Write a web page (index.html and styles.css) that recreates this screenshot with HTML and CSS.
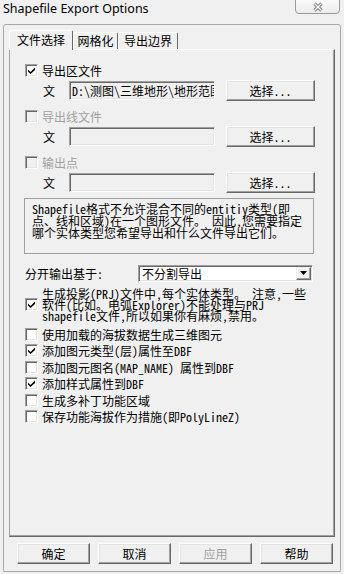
FILE: index.html
```html
<!DOCTYPE html>
<html lang="zh">
<head>
<meta charset="utf-8">
<title>Shapefile Export Options</title>
<link rel="stylesheet" href="styles.css">
</head>
<body>
<div class="window">
  <div class="titlebar">
    <span class="title">Shapefile Export Options</span>
    <div class="close">
      <svg width="12" height="10" viewBox="0 0 12 10"><path d="M2.5 1.5 L9.5 8.5 M9.5 1.5 L2.5 8.5" stroke="#808080" stroke-width="3.2"/><path d="M2.5 1.5 L9.5 8.5 M9.5 1.5 L2.5 8.5" stroke="#fdfdfd" stroke-width="1.3"/></svg>
    </div>
  </div>
  <div class="frame">
    <div class="tabs">
      <div class="tab active t1">文件选择</div>
      <div class="tab t2">网格化</div>
      <div class="tab t3">导出边界</div>
    </div>
    <div class="page">
      <div class="group">
        <div class="cb-row">
          <span class="cb"><svg width="7" height="7" viewBox="0 0 7 7"><path d="M0 2.5 L2.5 5 L7 0.5 V3 L2.5 7 L0 4.5 Z" fill="#000"/></svg></span>
          <span>导出区文件</span>
        </div>
        <div class="file-row">
          <span class="wen">文</span>
          <div class="field">D:\测图\三维地形\地形范围.shp</div>
          <button class="btn sel">选择...</button>
        </div>
      </div>
      <div class="group">
        <div class="cb-row">
          <span class="cb disabled"></span>
          <span class="dis">导出线文件</span>
        </div>
        <div class="file-row">
          <span class="wen">文</span>
          <div class="field"></div>
          <button class="btn sel">选择...</button>
        </div>
      </div>
      <div class="group">
        <div class="cb-row">
          <span class="cb disabled"></span>
          <span class="dis">输出点</span>
        </div>
        <div class="file-row">
          <span class="wen">文</span>
          <div class="field"></div>
          <button class="btn sel">选择...</button>
        </div>
      </div>
      <div class="desc">Shapefile格式不允许混合不同的entitiy类型(即<br>点、线和区域)在一个图形文件。 因此,您需要指定<br>哪个实体类型您希望导出和什么文件导出它们。</div>
      <div class="split-row">
        <span class="split-label">分开输出基于:</span>
        <div class="combo">
          <span class="combo-text">不分割导出</span>
          <span class="combo-btn"><svg width="7" height="4" viewBox="0 0 7 4"><path d="M0 0 H7 L3.5 4 Z" fill="#000"/></svg></span>
        </div>
      </div>
      <div class="multi">
        <span class="cb"><svg width="7" height="7" viewBox="0 0 7 7"><path d="M0 2.5 L2.5 5 L7 0.5 V3 L2.5 7 L0 4.5 Z" fill="#000"/></svg></span>
        <span class="multi-text">生成投影(PRJ)文件中,每个实体类型。 注意,一些<br>软件(比如。电弧Explorer)不能处理与PRJ<br>shapefile文件,所以如果你有麻烦,禁用。</span>
      </div>
      <div class="list">
        <div class="row"><span class="cb"></span><span>使用加载的海拔数据生成三维图元</span></div>
        <div class="row"><span class="cb"><svg width="7" height="7" viewBox="0 0 7 7"><path d="M0 2.5 L2.5 5 L7 0.5 V3 L2.5 7 L0 4.5 Z" fill="#000"/></svg></span><span>添加图元类型(层)属性至DBF</span></div>
        <div class="row"><span class="cb"></span><span>添加图元图名(MAP_NAME) 属性到DBF</span></div>
        <div class="row"><span class="cb"><svg width="7" height="7" viewBox="0 0 7 7"><path d="M0 2.5 L2.5 5 L7 0.5 V3 L2.5 7 L0 4.5 Z" fill="#000"/></svg></span><span>添加样式属性到DBF</span></div>
        <div class="row"><span class="cb"></span><span>生成多补丁功能区域</span></div>
        <div class="row"><span class="cb"></span><span>保存功能海拔作为措施(即PolyLineZ)</span></div>
      </div>
    </div>
    <div class="buttons">
      <button class="btn bottom">确定</button>
      <button class="btn bottom">取消</button>
      <button class="btn bottom dis">应用</button>
      <button class="btn bottom">帮助</button>
    </div>
  </div>
</div>
</body>
</html>
```
FILE: styles.css
```css
html, body {
  margin: 0;
  padding: 0;
  background: #f0f0f0;
}
body {
  font-family: "Noto Sans Mono CJK SC", "Noto Sans CJK SC", sans-serif;
  font-size: 12px;
  color: #000;
}
.window {
  width: 344px;
  height: 574px;
  overflow: hidden;
}
.titlebar {
  height: 24px;
  display: flex;
  justify-content: space-between;
  align-items: flex-start;
}
.title {
  font-family: "Noto Sans", sans-serif;
  font-size: 12.5px;
  line-height: 18px;
  margin-left: 3px;
  color: #000;
}
.close {
  width: 45px;
  height: 16px;
  margin-top: -2px;
  margin-right: 4px;
  box-sizing: border-box;
  border: 1px solid #9a9a9a;
  border-radius: 0 0 4px 4px;
  background: linear-gradient(#fbfbfb, #ececec);
  display: flex;
  align-items: center;
  justify-content: center;
  padding-top: 1px;
}
.frame {
  margin-left: 3px;
  width: 338px;
  height: 548px;
  box-sizing: border-box;
  border: 1px solid #a8a8a8;
  border-radius: 3px 3px 0 0;
  padding: 5px 5px 0;
}
.tabs {
  display: flex;
  align-items: flex-end;
  height: 20px;
  margin-bottom: -1px;
  position: relative;
  z-index: 1;
}
.tab {
  box-sizing: border-box;
  height: 17px;
  margin-bottom: 1px;
  border-top: 1px solid #fff;
  border-left: 1px solid #fff;
  border-right: 1px solid #696969;
  border-radius: 2px 2px 0 0;
  background: #f0f0f0;
  display: flex;
  align-items: center;
  justify-content: center;
  line-height: 12px;
}
.tab.active {
  height: 20px;
  margin-bottom: 0;
  padding-bottom: 1px;
}
.t1 { width: 64px; }
.t2 { width: 45px; }
.t3 { width: 60px; }
.page {
  height: 488px;
  box-sizing: border-box;
  border: 1px solid;
  border-color: #fff #696969 #696969 #a0a0a0;
  box-shadow: inset -1px -1px 0 #a0a0a0;
  padding: 10px 0 0 15px;
}
.group {
  margin-bottom: 5px;
}
.cb-row {
  display: flex;
  align-items: center;
  gap: 4px;
  height: 20px;
}
.cb {
  flex: none;
  width: 13px;
  height: 13px;
  box-sizing: border-box;
  border: 1px solid;
  border-color: #a0a0a0 #fff #fff #a0a0a0;
  box-shadow: inset 1px 1px 0 #696969, inset -1px -1px 0 #e3e3e3;
  background: #fff;
  display: flex;
  align-items: center;
  justify-content: center;
}
.cb svg {
  display: block;
}
.cb.disabled {
  background: #f0f0f0;
}
.dis {
  color: #a0a0a0;
}
.file-row {
  display: flex;
  align-items: center;
  height: 21px;
}
.wen {
  margin-left: 18px;
  width: 12px;
}
.field {
  margin-left: 14px;
  width: 146px;
  height: 19px;
  box-sizing: border-box;
  border: 1px solid;
  border-color: #a0a0a0 #fff #fff #a0a0a0;
  box-shadow: inset 1px 1px 0 #696969, inset -1px -1px 0 #e3e3e3;
  background: #f0f0f0;
  padding: 0 2px;
  line-height: 17px;
  white-space: nowrap;
  overflow: hidden;
}
.btn {
  font: inherit;
  color: #000;
  padding: 0;
  margin: 0;
  box-sizing: border-box;
  border: 1px solid;
  border-color: #fff #696969 #696969 #fff;
  box-shadow: inset -1px -1px 0 #a0a0a0, inset 1px 1px 0 #e3e3e3;
  background: #f0f0f0;
  border-radius: 0;
  line-height: 12px;
  white-space: nowrap;
}
.btn.dis {
  color: #a0a0a0;
}
.sel {
  margin-left: 11px;
  width: 89px;
  height: 21px;
}
.desc {
  margin: 4px 0 0 -1px;
  width: 290px;
  height: 56px;
  box-sizing: border-box;
  border: 1px solid #a0a0a0;
  padding: 4px 7px;
  line-height: 12px;
  white-space: nowrap;
}
.split-row {
  margin-top: 9px;
  height: 20px;
  display: flex;
  align-items: center;
}
.split-label {
  width: 113px;
}
.combo {
  width: 175px;
  height: 17px;
  box-sizing: border-box;
  border: 1px solid;
  border-color: #a0a0a0 #fff #fff #a0a0a0;
  box-shadow: inset 1px 1px 0 #696969, inset -1px -1px 0 #e3e3e3;
  background: #fff;
  display: flex;
  align-items: center;
  padding: 1px 1px 1px 3px;
}
.combo-text {
  flex: 1;
  line-height: 13px;
}
.combo-btn {
  width: 15px;
  height: 13px;
  box-sizing: border-box;
  border: 1px solid;
  border-color: #f0f0f0 #696969 #696969 #f0f0f0;
  box-shadow: inset -1px -1px 0 #a0a0a0, inset 1px 1px 0 #fff;
  background: #f0f0f0;
  display: flex;
  align-items: center;
  justify-content: center;
}
.combo-btn svg {
  display: block;
}
.multi {
  margin-top: 5px;
  display: flex;
  align-items: center;
  gap: 4px;
}
.multi-text {
  line-height: 11px;
  white-space: nowrap;
}
.list {
  margin-top: 5px;
}
.row {
  height: 16.5px;
  display: flex;
  align-items: center;
  gap: 4px;
  white-space: nowrap;
}
.buttons {
  display: flex;
  gap: 8px;
  margin: 6px 0 0 8px;
}
.bottom {
  width: 73px;
  height: 21px;
}
```
